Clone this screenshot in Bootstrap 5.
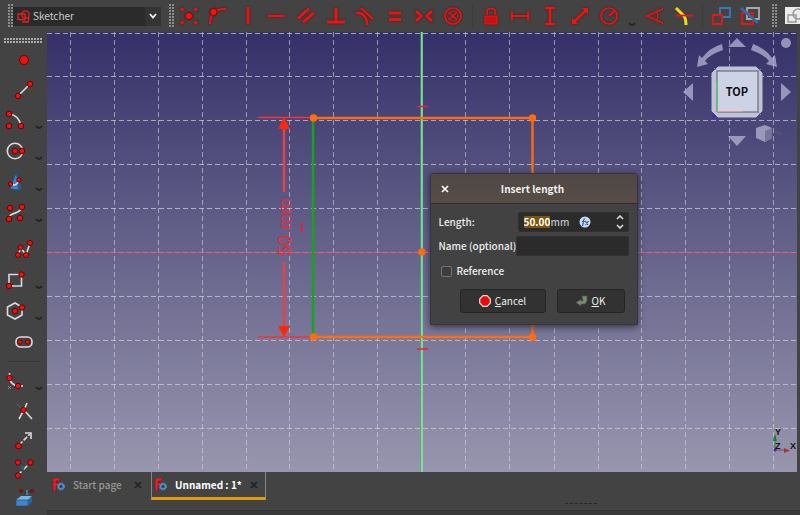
<!DOCTYPE html>
<html lang="en">
<head>
<meta charset="utf-8">
<meta name="viewport" content="width=device-width, initial-scale=1">
<title>Sketcher</title>
<link href="https://cdn.jsdelivr.net/npm/bootstrap@5.3.0/dist/css/bootstrap.min.css" rel="stylesheet">
<style>
  body { background: #434343; color: #ececec; font-family: "Noto Sans CJK SC", "Noto Sans", sans-serif; font-size: 10px; line-height: 16px; font-weight: 500; }
  .top-bar { height: 32px; background: #434343; }
  .tool { background: none; border: 0; padding: 0; display: flex; align-items: center; justify-content: center; flex: 1 1 0; min-width: 0; }
  .tool svg { width: 24px; height: 24px; flex: none; overflow: visible; }
  .tools-constrain { width: 294px; }
  .tools-dimension { width: 148px; }
  .tools-pair { width: 58px; }
  .menu-arrow { background: none; border: 0; padding: 0; width: 16px; flex: none; color: #222; display: flex; justify-content: center; }
  .menu-arrow svg { width: 8px; height: 5px; }
  .grip-v { width: 5px; height: 24px; flex: none; background: radial-gradient(circle at 1px 1px, #8c8c8c 1px, transparent 1px) 0 0 / 3px 3px; }
  .grip-h { width: 39px; height: 6px; background: radial-gradient(circle at 1px 1px, #aaa 1px, transparent 1px) 0 0 / 3px 3px; }
  .v-rule { width: 8px; height: 22px; background: linear-gradient(#3b3b3b, #3b3b3b) center / 1px 100% no-repeat; }
  .bench { width: 148px; height: 19px; background: #2b2b2b; }
  .bench select { appearance: none; background: transparent; color: #ccc; border: 0; padding: 0 0 0 3px; outline: 0; min-width: 0; font-size: 10px; line-height: 16px; }
  .bench-arrow { width: 16px; height: 19px; background: #343434; }
  .side-bar { width: 47px; }
  .side-bar .r29 { height: 29px; } .side-bar .r30 { height: 30px; } .side-bar .r31 { height: 31px; }
  .side-bar .menu-arrow { width: 17px; padding-top: 21px; }
  .side-head { height: 13px; padding: 6px 4px 0; }
  .side-gap { height: 6px; }
  .h-rule { height: 8px; background: linear-gradient(#393939, #393939) center / 32px 1px no-repeat; }
  .red { fill: none; stroke: #ee1212; stroke-width: 2; filter: drop-shadow(0 0 1px rgba(60,0,0,.6)); }
  .dot { fill: #ee1111; stroke: #6b0000; stroke-width: 1; }
  .wht { fill: none; stroke: #dadada; stroke-width: 1.6; }
  .view { min-height: 0; margin-right: 3px; background: linear-gradient(#353169, #9896ae); }
  .view > svg { display: block; width: 100%; height: 100%; position: absolute; inset: 0; }
  .grid { stroke: #d4d2d8; stroke-width: 1; stroke-dasharray: 5 3; shape-rendering: crispEdges; }
  .dim-text { font-family: "Liberation Sans", Arial, sans-serif; font-size: 19px; fill: #e22c36; }
  .axis-text { font-family: "Liberation Sans", Arial, sans-serif; font-size: 9px; font-weight: bold; fill: #111; }
  .cube-text { font-family: "Liberation Sans Narrow", "Noto Sans CJK SC", sans-serif; font-size: 11px; font-weight: bold; fill: #0c0c12; }
  .dlg { position: absolute; left: 51%; top: 141px; width: 208px; background: #424242; border: 1px solid #38363a; border-radius: 3px 3px 0 0; box-shadow: 0 2px 7px rgba(0,0,0,.55); }
  .dlg-head { height: 30px; background: linear-gradient(#4e4744, #574d48); border-bottom: 1px solid #302c2a; }
  .dlg-head h1 { font-size: 10px; line-height: 16px; font-weight: 700; margin: 0; padding-right: 30px; color: #f2f0ee; }
  .plain { background: none; border: 0; padding: 0; color: #fff; display: flex; align-items: center; justify-content: center; }
  .dlg-close { width: 28px; height: 28px; }
  .dlg-body { padding: 8px 8px 11px 8px; }
  .dlg-body label { width: 79px; white-space: nowrap; }
  .field { height: 20px; background: #2b2b2b; border: 1px solid #303030; border-radius: 2px; min-width: 0; }
  .field input, input.field { outline: 0; color: #fff; font-size: 10px; line-height: 16px; }
  .amount { width: 26px; height: 12px; border: 0; padding: 0; margin-left: 5px; background: #7b560c; font-weight: 700; }
  .unit { color: #bdbdbd; padding-left: 1px; }
  .formula { margin: 0 22px 0 auto; }
  .spin { width: 15px; height: 9px; }
  .tick { appearance: none; width: 11px; height: 11px; margin: 0 5px 0 2px; border: 1px solid #747474; border-radius: 2px; background: #3d3d3d; }
  .dlg-body .tick-row { height: 20px; margin-top: 5px; }
  .act { height: 24px; background: #323232; border: 1px solid #252525; border-radius: 3px; color: #eee; padding: 0; font-size: 10px; line-height: 16px; display: flex; align-items: center; justify-content: center; gap: 4px; }
  .act-row { gap: 11px; padding: 8px 4px 0 21px; }
  .act-cancel { width: 86px; } .act-ok { width: 68px; }
  .doc-tabs { height: 38px; padding-left: 3px; }
  .doc-tab { height: 28px; border-bottom: 3px solid transparent; }
  .doc-tab a { color: #969696; text-decoration: none; display: flex; align-items: center; gap: 8px; }
  .doc-tab .plain { color: #232323; }
  .tab-start { width: 101px; padding: 0 9px 0 2px; }
  .tab-doc { width: 115px; padding: 0 7px 0 2px; border: 1px solid #858585; border-top: 0; border-bottom: 3px solid #e29b0c; }
  .tab-doc a { color: #fff; font-weight: 700; }
  .status { height: 5px; background: #393939; border-top: 1px solid #333; }
  .hint { border-top: 1px dashed #252525; width: 32px; margin: 31px 203px 0 auto; }
</style>
<script src="https://cdn.jsdelivr.net/npm/bootstrap@5.3.0/dist/js/bootstrap.bundle.min.js"></script>
</head>
<body class="d-flex flex-column vh-100 overflow-hidden">
<svg width="0" height="0" class="position-absolute" aria-hidden="true">
  <symbol id="down" viewBox="0 0 8 5"><path d="M1 1 Q4 5 7 1" fill="none" stroke="#222" stroke-width="1.8"/></symbol>
  <symbol id="freecad" viewBox="0 0 13 13"><path d="M1 0H8V3H4V5H7V7.500H4V13H1Z" fill="#d8262b" stroke="#8c0c12" stroke-width=".6"/><circle cx="9" cy="8.500" r="2.500" fill="none" stroke="#4a93d8" stroke-width="1.500"/><circle cx="9" cy="8.500" r="3.600" fill="none" stroke="#4a93d8" stroke-width="1" stroke-dasharray="1.500 1.400"/></symbol>
  <symbol id="cross" viewBox="0 0 8 8"><path d="M1 1L7 7M7 1L1 7" stroke="currentColor" stroke-width="1.700"/></symbol>
</svg>

<header class="top-bar d-flex align-items-center flex-nowrap">
  <div class="grip-v ms-2"></div>
  <div class="bench d-flex align-items-center flex-shrink-0">
    <svg class="ms-1" width="13" height="13" viewBox="0 0 13 13" fill="none" stroke="#e52222" stroke-width="1.300"><circle cx="8.500" cy="4.500" r="3.700"/><path d="M1 4H8V9.500H1ZM5 12H11L12 7"/></svg>
    <select class="flex-grow-1" aria-label="Workbench"><option>Sketcher</option></select>
    <span class="bench-arrow d-flex align-items-center justify-content-center"><svg width="8" height="6" viewBox="0 0 8 6"><path d="M1 1L4 4.500L7 1" fill="none" stroke="#eee" stroke-width="1.800"/></svg></span>
  </div>
  <div class="grip-v ms-2"></div>
  <div class="tools-constrain d-flex flex-shrink-0 align-self-stretch">
    <button class="tool" aria-label="Coincident"><svg class="red" viewBox="0 0 24 24"><circle cx="12" cy="12" r="3.500" fill="#f01414" stroke="#900" stroke-width="1"/><g stroke-width="3"><path d="M4 4L6.500 6.500M20 4L17.500 6.500M4 20L6.500 17.500M20 20L17.500 17.500"/></g></svg></button>
    <button class="tool" aria-label="Point on object"><svg class="red" viewBox="0 0 24 24"><path d="M4 20Q4 4 20 5"/><circle cx="7.500" cy="8" r="3.500" fill="#f01414" stroke="#900" stroke-width="1"/></svg></button>
    <button class="tool" aria-label="Vertical"><svg class="red" viewBox="0 0 24 24"><path d="M12 3V20" stroke-width="2.800"/></svg></button>
    <button class="tool" aria-label="Horizontal"><svg class="red" viewBox="0 0 24 24"><path d="M3 12H20" stroke-width="2.200"/></svg></button>
    <button class="tool" aria-label="Parallel"><svg class="red" viewBox="0 0 24 24"><path d="M4 14.500L15 4.500M9 18.500L20 8.500" stroke-width="3"/></svg></button>
    <button class="tool" aria-label="Perpendicular"><svg class="red" viewBox="0 0 24 24"><path d="M3 18H21M12 4V18" stroke-width="3"/></svg></button>
    <button class="tool" aria-label="Tangent"><svg class="red" viewBox="0 0 24 24"><path d="M8 4L20 15" stroke-width="2.200"/><path d="M3 9Q13 8 14.500 21" stroke-width="2.200"/></svg></button>
    <button class="tool" aria-label="Equal"><svg class="red" viewBox="0 0 24 24"><path d="M6 9H18M6 15.500H18" stroke-width="2.800"/></svg></button>
    <button class="tool" aria-label="Symmetric"><svg class="red" viewBox="0 0 24 24"><path d="M4 7L9 12L4 17M20 7L15 12L20 17" stroke-width="2.800"/></svg></button>
    <button class="tool" aria-label="Block"><svg class="red" viewBox="0 0 24 24"><circle cx="12" cy="12" r="8" stroke-width="1.700"/><circle cx="12" cy="12" r="5.300" stroke-width=".7"/><path d="M8 8L16 16M16 8L8 16" stroke-width="1.500"/></svg></button>
  </div>
  <div class="v-rule flex-shrink-0"></div>
  <div class="tools-dimension d-flex flex-shrink-0 align-self-stretch">
    <button class="tool" aria-label="Lock"><svg class="red" viewBox="0 0 24 24"><path d="M8 11V7Q8 4.500 12 4.500T16 7V11" stroke-width="1.700"/><path d="M6 12H18V20H6Z" fill="#c81010" stroke-width="1.200"/></svg></button>
    <button class="tool" aria-label="Horizontal distance"><svg class="red" viewBox="0 0 24 24"><path d="M4 7.500V16.500M20 7.500V16.500M4 12H20" stroke-width="2"/></svg></button>
    <button class="tool" aria-label="Vertical distance"><svg class="red" viewBox="0 0 24 24"><path d="M7 4H17M7 20H17M12 4V20" stroke-width="2.400"/></svg></button>
    <button class="tool" aria-label="Distance"><svg class="red" viewBox="0 0 24 24"><path d="M6 18L18 6" stroke-width="2.500"/><path d="M14 4H20V10ZM4 14V20H10Z" fill="#f01414" stroke="none"/></svg></button>
    <button class="tool" aria-label="Radius"><svg class="red" viewBox="0 0 24 24"><circle cx="12" cy="12" r="8" stroke-width="1.700"/><path d="M12 12L17 7" /></svg></button>
  </div>
  <button class="menu-arrow pt-3" aria-label="More dimensions"><svg><use href="#down"/></svg></button>
  <div class="tools-pair d-flex flex-shrink-0 align-self-stretch">
    <button class="tool" aria-label="Angle"><svg class="red" viewBox="0 0 24 24"><path d="M20 5L4 12L20 19" stroke-width="1.700"/><path d="M13.500 8Q16 12 13.500 16" stroke-width="1.200"/></svg></button>
    <button class="tool" aria-label="Refraction"><svg viewBox="0 0 24 24" fill="none"><path d="M4 4L12 12Q14 15 14 21" stroke="#f3dc14" stroke-width="3"/><path d="M4 11.500H21" stroke="#e81515" stroke-width="1.800"/></svg></button>
  </div>
  <div class="v-rule flex-shrink-0"></div>
  <div class="tools-pair d-flex flex-shrink-0 align-self-stretch">
    <button class="tool" aria-label="Toggle driving constraint"><svg viewBox="0 0 24 24" fill="none" stroke-width="1.800"><path d="M11 4H21V13H11Z" stroke="#3a78b8"/><path d="M4 11H13V20H4Z" stroke="#e81515" fill="#434343"/></svg></button>
    <button class="tool" aria-label="Activate constraint"><svg viewBox="0 0 24 24" fill="none" stroke-width="1.800"><path d="M9 4H21V15H9Z" stroke="#a9a9a9"/><path d="M4 9H15V20H4Z" stroke="#e81515"/><path d="M3 4L20 19" stroke="#2d6cab" stroke-width="3"/></svg></button>
  </div>
  <div class="grip-v ms-2"></div>
  <button class="tool ms-2" aria-label="Validate sketch"><svg viewBox="0 0 24 24" fill="none"><path d="M4 3H24V20H4Z" fill="#ececec"/><circle cx="17" cy="10" r="5" stroke="#999" stroke-width="1.500"/><path d="M7 11H15V18H7Z" stroke="#999" stroke-width="1.500"/></svg></button>
</header>

<div class="d-flex flex-grow-1" style="min-height:0">
  <nav class="side-bar flex-shrink-0" aria-label="Geometry">
    <div class="side-head"><div class="grip-h"></div></div>
    <div class="d-flex r30"><button class="tool" aria-label="Point"><svg viewBox="0 0 24 24"><circle class="dot" cx="12" cy="12" r="4.500"/></svg></button></div>
    <div class="d-flex r29"><button class="tool" aria-label="Line"><svg viewBox="0 0 24 24"><path class="wht" d="M6 18L18 6"/><circle class="dot" cx="6" cy="18" r="2.800"/><circle class="dot" cx="18" cy="6" r="2.800"/></svg></button></div>
    <div class="d-flex r31"><button class="tool" aria-label="Arc"><svg viewBox="0 0 24 24"><path class="wht" d="M6 6Q16 7 18 18"/><circle class="dot" cx="6" cy="6" r="2.800"/><circle class="dot" cx="6" cy="18" r="2.800"/><circle class="dot" cx="18" cy="18" r="2.800"/></svg></button><button class="menu-arrow" aria-label="Arc tools"><svg><use href="#down"/></svg></button></div>
    <div class="d-flex r31"><button class="tool" aria-label="Circle"><svg viewBox="0 0 24 24"><circle class="wht" cx="12" cy="12" r="7.700"/><circle class="dot" cx="12" cy="12" r="2.800"/><circle class="dot" cx="19" cy="12" r="2.800"/></svg></button><button class="menu-arrow" aria-label="Circle tools"><svg><use href="#down"/></svg></button></div>
    <div class="d-flex r31"><button class="tool" aria-label="Conic"><svg viewBox="0 0 24 24"><path d="M13 3L18.500 18Q13 22 7 18Z" fill="#3b83c4" stroke="#1d4e82"/><path d="M13 3L15 20Q18 20 18.500 18Z" fill="#225c98"/><path class="wht" d="M8 14Q14 17 16 10"/><circle class="dot" cx="7.500" cy="14" r="2.200"/><circle class="dot" cx="16" cy="10" r="2.200"/></svg></button><button class="menu-arrow" aria-label="Conic tools"><svg><use href="#down"/></svg></button></div>
    <div class="d-flex r31"><button class="tool" aria-label="B-spline"><svg viewBox="0 0 24 24"><path class="wht" d="M6 18C6 10 16 15 19 6"/><circle class="dot" cx="7" cy="7" r="2.800"/><circle class="dot" cx="6" cy="18" r="2.800"/><circle class="dot" cx="19" cy="6" r="2.800"/><circle class="dot" cx="17" cy="17" r="2.800"/></svg></button><button class="menu-arrow" aria-label="B-spline tools"><svg><use href="#down"/></svg></button></div>
    <div class="side-gap"></div>
    <div class="d-flex r30"><button class="tool" aria-label="Polyline"><svg viewBox="0 0 24 24"><path class="wht" d="M6 18L9 11L14 18L18 6"/><circle class="dot" cx="6" cy="18" r="2.500"/><circle class="dot" cx="8.500" cy="10.500" r="2.500"/><circle class="dot" cx="14" cy="18" r="2.500"/><circle class="dot" cx="18" cy="6" r="2.500"/></svg></button></div>
    <div class="d-flex r31"><button class="tool" aria-label="Rectangle"><svg viewBox="0 0 24 24"><path class="wht" d="M6 6.500H18.500V18H6Z"/><circle class="dot" cx="18.500" cy="6.500" r="2.700"/><circle class="dot" cx="6" cy="18" r="2.700"/></svg></button><button class="menu-arrow" aria-label="Rectangle tools"><svg><use href="#down"/></svg></button></div>
    <div class="d-flex r31"><button class="tool" aria-label="Polygon"><svg viewBox="0 0 24 24"><path class="wht" d="M12 4L19 8V16L12 20L4.500 16V8Z"/><circle class="dot" cx="12" cy="12" r="2.700"/><circle class="dot" cx="19" cy="8.500" r="2.700"/></svg></button><button class="menu-arrow" aria-label="Polygon tools"><svg><use href="#down"/></svg></button></div>
    <div class="d-flex r31"><button class="tool" aria-label="Slot"><svg viewBox="0 0 24 24"><rect class="wht" x="4" y="7" width="16" height="10" rx="4.500"/><circle class="dot" cx="8" cy="12" r="2.200"/><circle class="dot" cx="15.500" cy="12" r="2.200"/></svg></button></div>
    <div class="h-rule"></div>
    <div class="d-flex r31"><button class="tool" aria-label="Fillet"><svg viewBox="0 0 24 24"><path class="wht" d="M6.500 4V9Q8 16 15 17H20"/><path d="M5 17L8 20M5 20L8 17" stroke="#888"/><circle class="dot" cx="6.500" cy="9" r="2.700"/><circle class="dot" cx="15" cy="17" r="2.700"/></svg></button><button class="menu-arrow" aria-label="Fillet tools"><svg><use href="#down"/></svg></button></div>
    <div class="d-flex r29"><button class="tool" aria-label="Trim"><svg viewBox="0 0 24 24"><path class="wht" d="M15 4L12 11L7 20M12 11L20 20"/><path d="M5 5L11 11" stroke="#4c83b3" stroke-dasharray="2 1"/><circle class="dot" cx="11.500" cy="11" r="2.600"/></svg></button></div>
    <div class="d-flex r29"><button class="tool" aria-label="Extend"><svg viewBox="0 0 24 24"><path class="wht" d="M7 17L18 6" stroke-dasharray="5 1.500"/><path class="wht" d="M13 5H19V11" stroke-width="2.200"/><circle class="dot" cx="6.500" cy="18" r="2.900"/></svg></button></div>
    <div class="d-flex r29"><button class="tool" aria-label="Split"><svg viewBox="0 0 24 24"><path class="wht" d="M6 18L19 5" stroke-dasharray="5 3"/><path d="M6 6L11 11" stroke="#37658e"/><circle class="dot" cx="6" cy="5.500" r="2.700"/><circle class="dot" cx="18.500" cy="5.500" r="2.700"/><circle class="dot" cx="6" cy="18.500" r="2.700"/><circle cx="11" cy="11" r="1.500" fill="#15707a"/></svg></button></div>
    <div class="d-flex r29"><button class="tool" aria-label="External geometry"><svg viewBox="0 0 24 24"><path d="M10 5L15 7L20 4" stroke="#333" fill="none"/><path d="M4 14L9 10H20L16 14Z" fill="#79b3e8"/><path d="M4 14H16V20H4Z" fill="#4285c8" stroke="#1d4d80" stroke-width=".7"/><path d="M16 14L20 10V16L16 20Z" fill="#2b639e"/><circle class="dot" cx="9" cy="5" r="1.300"/><circle class="dot" cx="20" cy="5" r="1.300"/><path d="M15 4V9" stroke="#37a0a8" stroke-width="1.500"/></svg></button></div>
  </nav>

  <div class="d-flex flex-column flex-grow-1" style="min-width:0">
    <main class="view flex-grow-1 position-relative">
      <svg viewBox="47 32 750 440" preserveAspectRatio="xMidYMid slice" role="img" aria-label="Sketch view">
        <g class="grid">
          <path stroke-opacity=".6" d="M70.500 32V472M114.500 32V472M158.500 32V472M202.500 32V472M246.500 32V472M289.500 32V472M333.500 32V472M377.500 32V472M465.500 32V472M509.500 32V472M554.500 32V472M598.500 32V472M641.500 32V472M685.500 32V472M729.500 32V472M773.500 32V472"/>
          <path stroke-opacity=".7" d="M47 33.500H797M47 76.500H797M47 120.500H797M47 164.500H797M47 208.500H797M47 252.500H797M47 296.500H797M47 340.500H797M47 384.500H797M47 428.500H797"/>
        </g>
        <path d="M47 252.500H797" stroke="#e8535c" stroke-opacity=".75"/>
        <path d="M421.500 32V472" stroke="#2fc653" stroke-width="2"/><path d="M422 32V472" stroke="#c5f7cf" stroke-width="1"/>
        <path d="M313 118H532.500V337H313" fill="none" stroke="#ff6d10" stroke-width="2.300"/>
        <path d="M313 118V337" stroke="#14a51c" stroke-width="2.500"/>
        <path d="M258 117.500H313M258 337H313" stroke="#f5323a" stroke-width="1.500"/>
        <path d="M284 128V192M284 262V327" stroke="#e83f4b" stroke-width="2.500"/>
        <path d="M284 117L278 129H290ZM284 337L278 326H290Z" fill="#ff260c"/>
        <path d="M301.500 222V232M417 106.500H428M417 349H428" stroke="#ee1e2a" stroke-width="1.500"/>
        <g fill="#ff6d10"><circle cx="313.500" cy="118" r="3.700"/><circle cx="532.500" cy="118" r="3.700"/><circle cx="313.500" cy="337" r="3.700"/><circle cx="532.500" cy="337" r="3.700"/><circle cx="422" cy="252" r="3.700"/></g>
        <text class="dim-text" text-anchor="middle" transform="translate(291 227) rotate(-90)">50 mm</text>
        <g fill="#b4b3d2" fill-opacity=".75">
          <path d="M737 38L746 47H728ZM737 146L728 136H746ZM683 92L693 83V101ZM791 92L781 83V101Z"/>
          <circle cx="786" cy="43" r="5"/>
          <path d="M722 44L723 50Q709 55 705 61L708 64L697 67L699 55L702 58Q709 48 722 44Z"/>
          <path d="M753 44L751 50Q765 55 769 61L766 64L777 67L775 55L772 58Q765 48 753 44Z"/>
          <path d="M756 128L765 125L772 128V138L765 142L756 138Z"/>
        </g>
        <path d="M765 131L772 128V138L765 142Z" fill="#77759c"/><path d="M775 132L783 134" stroke="#55527a" stroke-width="2"/>
        <path d="M718 67H756L762 73V111L756 117H718L712 111V73Z" fill="#c0c3d8" stroke="#c0c3d8" stroke-linejoin="round"/>
        <path d="M717 71H758V112H717Z" fill="#cdd3e4" stroke="#55586a"/><path d="M717 71L714 68M758 71L761 69M758 112L761 115" stroke="#8a8ca0"/>
        <path d="M717 81V111" stroke="#4fdd69"/><path d="M717 111.500H743" stroke="#e4979f"/><path d="M711 116L715 114V118Z" fill="#2b2bd8"/>
        <text class="cube-text" x="737" y="96" text-anchor="middle">TOP</text>
        <path d="M775 450H786" stroke="#a03a44"/><path d="M784 448L790 450.500L784 453Z" fill="#aa3338"/><path d="M775 435V450" stroke="#208d37"/><path d="M773 441L775 434L777 441Z" fill="#177f2d"/><circle cx="775" cy="450" r="1.500" fill="#2929bb"/>
        <g class="axis-text"><text x="775" y="435">Y</text><text x="775" y="449">Z</text><text x="790" y="449">X</text></g>
      </svg>

      <form class="dlg" role="dialog" aria-labelledby="dlg-title" onsubmit="return false">
        <div class="dlg-head d-flex align-items-center">
          <button type="button" class="plain dlg-close" aria-label="Close"><svg width="8" height="8"><use href="#cross"/></svg></button>
          <h1 id="dlg-title" class="flex-grow-1 text-center">Insert length</h1>
        </div>
        <div class="dlg-body">
          <div class="d-flex align-items-center">
            <label for="len">Length:</label>
            <div class="field flex-grow-1 d-flex align-items-center">
              <input id="len" class="amount" value="50.00"><span class="unit">mm</span>
              <button type="button" class="plain formula" aria-label="Formula"><svg width="12" height="12" viewBox="0 0 12 12"><circle cx="6" cy="6" r="5.500" fill="#c9daf0"/><path d="M3.500 10Q4.500 7 4.500 4.500Q5 2.500 6 3M3 5.500H6M6.500 5L9 9M9.500 5L6.500 9" fill="none" stroke="#335da9" stroke-width="1.200"/></svg></button>
              <div class="d-flex flex-column">
                <button type="button" class="plain spin" aria-label="Increase"><svg width="8" height="5" viewBox="0 0 8 5"><path d="M1 4L4 1L7 4" fill="none" stroke="#ddd" stroke-width="1.600"/></svg></button>
                <button type="button" class="plain spin" aria-label="Decrease"><svg width="8" height="5" viewBox="0 0 8 5"><path d="M1 1L4 4L7 1" fill="none" stroke="#ddd" stroke-width="1.600"/></svg></button>
              </div>
            </div>
          </div>
          <div class="d-flex align-items-center mt-1">
            <label for="nm">Name (optional)</label>
            <input id="nm" class="field flex-grow-1">
          </div>
          <div class="tick-row d-flex align-items-center"><input type="checkbox" id="ref" class="tick"><label for="ref">Reference</label></div>
          <div class="act-row d-flex">
            <button type="button" class="act act-cancel"><svg width="12" height="12" viewBox="0 0 12 12"><path d="M4 .700H8L11.300 4V8L8 11.300H4L.700 8V4Z" fill="#e80c0c" stroke="#f2d9d9" stroke-width="1.200"/></svg><span><u>C</u>ancel</span></button>
            <button type="button" class="act act-ok"><svg width="12" height="12" viewBox="0 0 12 12"><path d="M6 1H11V6L9 9H5V11L0 7.500L5 4.500V6H7Z" fill="#7b8b6e" stroke="#4f5a47" stroke-width=".7"/></svg><span><u>O</u>K</span></button>
          </div>
        </div>
      </form>
    </main>
    <div class="doc-tabs d-flex align-items-start">
      <div class="doc-tab tab-start d-flex align-items-center justify-content-between"><a href="#"><svg width="13" height="13"><use href="#freecad"/></svg>Start page</a><button class="plain" aria-label="Close Start page"><svg width="8" height="8"><use href="#cross"/></svg></button></div>
      <div class="doc-tab tab-doc d-flex align-items-center justify-content-between"><a href="#"><svg width="13" height="13"><use href="#freecad"/></svg>Unnamed : 1*</a><button class="plain" aria-label="Close Unnamed"><svg width="8" height="8"><use href="#cross"/></svg></button></div>
      <div class="hint"></div>
    </div>
    <footer class="status"></footer>
  </div>
</div>
</body>
</html>
